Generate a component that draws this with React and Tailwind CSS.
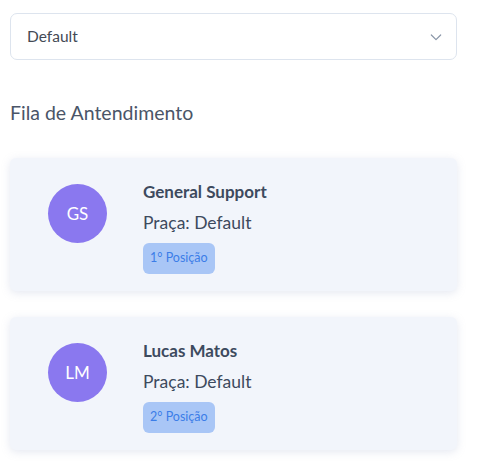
import React from "react";

const queue = [
  { initials: "GS", name: "General Support", praca: "Default", pos: "1° Posição" },
  { initials: "LM", name: "Lucas Matos", praca: "Default", pos: "2° Posição" },
];

const App = () => {
  return (
    <div className="w-[479px] h-[463px] bg-white px-[10px] pt-[13px] font-['Lato','Noto_Sans',sans-serif]">
      <div className="w-[447px] h-[47px] flex items-center justify-between border border-[#dde4ee] rounded-[7px] pl-[16px] pr-[12px] text-[15.5px] text-[#444a55]">
        <span>Default</span>
        <svg width="16" height="16" viewBox="0 0 24 24" fill="none" stroke="#8a96a8" strokeWidth="1.8" strokeLinecap="round" strokeLinejoin="round">
          <path d="M5 9l7 7 7-7" />
        </svg>
      </div>

      <h2 className="mt-[40px] text-[19.5px] text-[#4a5568] leading-[26px]">Fila de Antendimento</h2>

      <div className="mt-[32px] flex flex-col gap-[26px]">
        {queue.map((item) => (
          <div
            key={item.initials}
            className="w-[447px] h-[133px] bg-[#f2f5fb] rounded-[6px] shadow-[0_2px_8px_rgba(150,165,200,0.25)] flex items-start pt-[23px] pl-[38px]"
          >
            <div className="w-[59px] h-[59px] mt-[3px] rounded-full bg-[#8a78ef] flex items-center justify-center text-white text-[17px]">
              {item.initials}
            </div>
            <div className="ml-[36px] flex flex-col items-start">
              <div className="text-[17px] font-bold text-[#3d4a5e] leading-[22px]">{item.name}</div>
              <div className="mt-[9px] text-[17.5px] text-[#3d4a5e] leading-[22px]">Praça: {item.praca}</div>
              <div className="mt-[9px] h-[31px] px-[7px] flex items-center rounded-[6px] bg-[#a9c6f6] text-[12.5px] text-[#3b7de8]">
                {item.pos}
              </div>
            </div>
          </div>
        ))}
      </div>
    </div>
  );
};

export default App;
